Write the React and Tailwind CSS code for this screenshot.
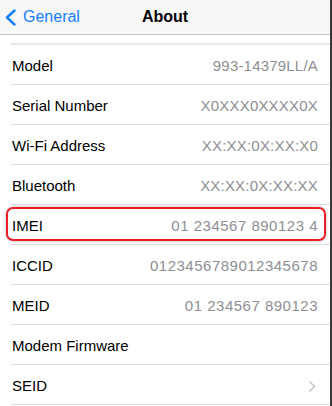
const rows = [
  { label: "Model", value: "993-14379LL/A" },
  { label: "Serial Number", value: "X0XXX0XXXX0X" },
  { label: "Wi-Fi Address", value: "XX:XX:0X:XX:X0" },
  { label: "Bluetooth", value: "XX:XX:0X:XX:XX" },
  { label: "IMEI", value: "01 234567 890123 4", highlight: true, wide: true },
  { label: "ICCID", value: "0123456789012345678", wide: true },
  { label: "MEID", value: "01 234567 890123", wide: true },
  { label: "Modem Firmware", value: "" },
  { label: "SEID", value: "", chevron: true },
]

const Row = ({ row }) => (
  <div className="relative pl-[11px]">
    <div className="h-10 pl-px pr-[12px] pt-[3px] flex items-center justify-between border-b border-[#dcdcdf]">
      <span className="text-[15px] text-black">{row.label}</span>
      {row.value && (
        <span className={row.wide ? "text-[15px] tracking-[0.5px] text-[#8e8e93]" : "text-[15px] tracking-[0.2px] text-[#8e8e93]"}>
          {row.value}
        </span>
      )}
      {row.chevron && (
        <svg width="8" height="13" viewBox="0 0 8 13" className="mr-[2px]">
          <path d="M1.5 1.5 L6.5 6.5 L1.5 11.5" fill="none" stroke="#c7c7cc" strokeWidth="1.6" />
        </svg>
      )}
    </div>
    {row.highlight && (
      <div className="absolute left-[6px] right-[4px] top-[2px] bottom-[4px] rounded-[7px] border-2 border-[#ee1c24] shadow-[0_0_3px_rgba(0,0,0,0.35)]" />
    )}
  </div>
)

export default function App() {
  return (
    <div className="w-[332px] h-[406px] overflow-hidden flex bg-white" style={{ fontFamily: '"Liberation Sans", Arial, sans-serif' }}>
      <div className="w-[330px] flex flex-col">
        <div className="h-[35px] shrink-0 bg-[#f7f7f7] border-b border-[#c8c8cc] relative flex items-center justify-center">
          <div className="absolute left-[5px] top-0 h-full flex items-center gap-[7px]">
            <svg width="11" height="17" viewBox="0 0 11 17">
              <path d="M9.5 1.5 L2 8.5 L9.5 15.5" fill="none" stroke="#157efb" strokeWidth="2.4" strokeLinecap="round" strokeLinejoin="round" />
            </svg>
            <span className="text-[16px] text-[#157efb]">General</span>
          </div>
          <span className="text-[16px] font-bold text-black">About</span>
        </div>
        <div className="h-[10px] shrink-0 flex items-end">
          <div className="ml-[11px] flex-1 h-[2px] bg-[#e8e8ea]" />
        </div>
        <div className="flex flex-col">
          {rows.map((row) => (
            <Row key={row.label} row={row} />
          ))}
        </div>
      </div>
      <div className="w-[2px] bg-[#3a3a3c]" />
    </div>
  )
}
